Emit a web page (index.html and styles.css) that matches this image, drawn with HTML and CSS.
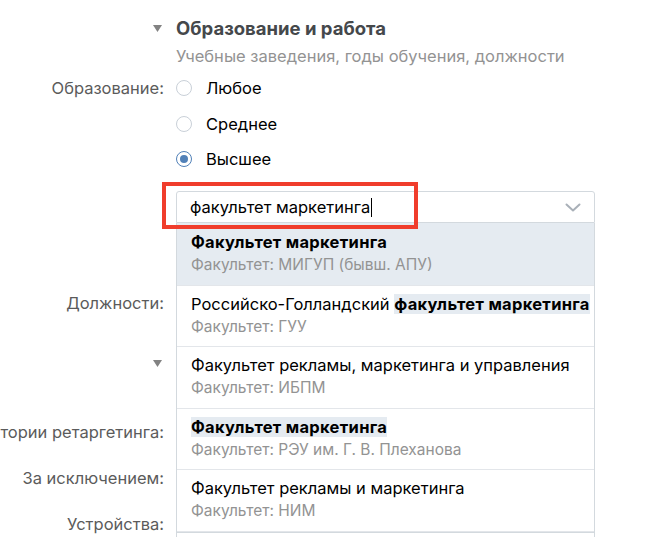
FILE: index.html
```html
<!DOCTYPE html>
<html lang="ru">
<head>
  <meta charset="UTF-8" />
  <title>Образование и работа</title>
  <link rel="stylesheet" href="styles.css">
</head>
<body>
<div class="form">
  <div class="row head">
    <div class="label"><svg class="tri" width="9" height="7" viewBox="0 0 9 7"><path d="M0 0h9L4.5 7z" fill="#828282"/></svg></div>
    <div class="title">Образование и работа</div>
  </div>
  <div class="row sub-row">
    <div class="label"></div>
    <div class="subtitle">Учебные заведения, годы обучения, должности</div>
  </div>

  <div class="row radio-row">
    <div class="label">Образование:</div>
    <label class="radio"><span class="circle"></span>Любое</label>
  </div>
  <div class="row radio-row">
    <div class="label"></div>
    <label class="radio"><span class="circle"></span>Среднее</label>
  </div>
  <div class="row radio-row">
    <div class="label"></div>
    <label class="radio"><span class="circle checked"></span>Высшее</label>
  </div>

  <div class="row select-row">
    <div class="label"></div>
    <div class="select-wrap">
      <div class="select">
        <span class="value">факультет маркетинга</span><span class="caret"></span>
        <svg class="chevron" width="16" height="9" viewBox="0 0 16 9"><path d="M1.5 1.5l6.5 6 6.5-6" fill="none" stroke="#a9b0b8" stroke-width="2" stroke-linecap="round" stroke-linejoin="round"/></svg>
      </div>
      <div class="mark"></div>
      <!-- выпадающий список -->
      <div class="dropdown">
        <div class="item active">
          <div class="item-title"><b>Факультет маркетинга</b></div>
          <div class="item-sub">Факультет: МИГУП (бывш. АПУ)</div>
        </div>
        <div class="item">
          <div class="item-title">Российско-Голландский <b class="hl">факультет маркетинга</b></div>
          <div class="item-sub">Факультет: ГУУ</div>
        </div>
        <div class="item">
          <div class="item-title">Факультет рекламы, маркетинга и управления</div>
          <div class="item-sub">Факультет: ИБПМ</div>
        </div>
        <div class="item">
          <div class="item-title"><b class="hl">Факультет маркетинга</b></div>
          <div class="item-sub">Факультет: РЭУ им. Г. В. Плеханова</div>
        </div>
        <div class="item">
          <div class="item-title">Факультет рекламы и маркетинга</div>
          <div class="item-sub">Факультет: НИМ</div>
        </div>
      </div>
    </div>
  </div>

  <div class="row field-row jobs">
    <div class="label">Должности:</div>
    <div class="field"></div>
  </div>

  <div class="row head head2">
    <div class="label"><svg class="tri" width="9" height="7" viewBox="0 0 9 7"><path d="M0 0h9L4.5 7z" fill="#828282"/></svg></div>
    <div class="title"></div>
  </div>

  <div class="row field-row retarget">
    <div class="label">Аудитории ретаргетинга:</div>
    <div class="field"></div>
  </div>
  <div class="row field-row">
    <div class="label">За исключением:</div>
    <div class="field"></div>
  </div>
  <div class="row field-row">
    <div class="label">Устройства:</div>
    <div class="field"></div>
  </div>
</div>
</body>
</html>
```

FILE: styles.css
```css
html, body {
  margin: 0;
  overflow: hidden;
}
body {
  font-family: Inter, "Noto Sans", sans-serif;
  background-color: #fff;
  color: #000;
  font-size: 16.5px;
}
.form {
  padding-top: 18px;
}
.row {
  display: flex;
  align-items: center;
}
.label {
  width: 164px;
  flex: none;
  margin-right: 12px;
  display: flex;
  justify-content: flex-end;
  white-space: nowrap;
  color: #5b5b5b;
  font-size: 16.5px;
}
.head {
  height: 20px;
}
.tri {
  margin-right: 2px;
}
.title {
  font-size: 18.5px;
  font-weight: 700;
  color: #45484b;
}
.sub-row {
  height: 20px;
  margin-top: 8px;
}
.subtitle {
  color: #939393;
  font-size: 16.5px;
}
.radio-row {
  height: 36px;
  margin-top: -0.5px;
}
.sub-row + .radio-row {
  margin-top: 4px;
}
.radio {
  display: flex;
  align-items: center;
  gap: 14px;
}
.circle {
  width: 14px;
  height: 14px;
  border: 1px solid #c9d0d8;
  border-radius: 50%;
  display: flex;
  align-items: center;
  justify-content: center;
}
.circle.checked {
  border-color: #5181b8;
}
.circle.checked::after {
  content: "";
  width: 8px;
  height: 8px;
  border-radius: 50%;
  background: #5181b8;
}
.select-row {
  margin-top: 14px;
  align-items: flex-start;
}
.select-wrap {
  position: relative;
  width: 419px;
}
.select {
  height: 30px;
  border: 1px solid #d3d9de;
  border-radius: 3px 3px 0 0;
  display: flex;
  align-items: center;
  padding: 0 12px 0 13px;
}
.value {
  color: #000;
}
.caret {
  width: 1px;
  height: 19px;
  background: #000;
  margin-left: 1px;
}
.chevron {
  margin-left: auto;
  margin-right: 1px;
}
/* красная рамка поверх поля */
.mark {
  position: absolute;
  left: -14px;
  top: -9px;
  width: 248px;
  height: 39px;
  border: 4px solid #f03d2c;
  z-index: 3;
}
.dropdown {
  position: absolute;
  top: 32px;
  left: 0;
  right: 0;
  background: #fff;
  border: 1px solid #d3d9de;
  border-top: none;
  z-index: 2;
}
.item {
  padding: 9px 14px 10.5px;
  border-bottom: 1px solid #e3e6ea;
  white-space: nowrap;
  overflow: hidden;
}
.item.active {
  background: #e5ebf1;
  padding-top: 10px;
}
.item-title {
  line-height: 18px;
  color: #000;
}
.item-title b {
  letter-spacing: 0.3px;
}
.item-title .hl {
  background: #e5ebf1;
}
.item-sub {
  margin-top: 5px;
  line-height: 18px;
  font-size: 15.5px;
  color: #939393;
}
.field-row {
  height: 32px;
}
.field {
  box-sizing: border-box;
  width: 419px;
  height: 32px;
  border: 1px solid #d3d9de;
  border-radius: 3px;
}
.jobs {
  margin-top: 64px;
}
.head2 {
  margin-top: 34px;
}
.retarget {
  margin-top: 43px;
}
.field-row + .field-row {
  margin-top: 14px;
}
```
